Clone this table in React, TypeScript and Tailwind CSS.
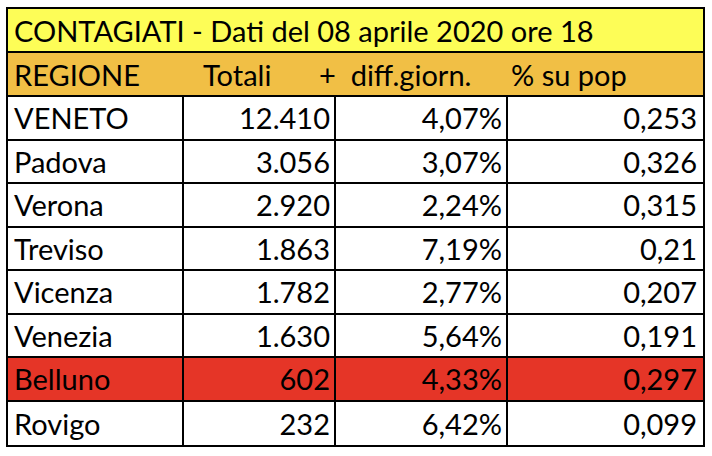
const rows = [
  { name: "VENETO", tot: "12.410", diff: "4,07%", pop: "0,253" },
  { name: "Padova", tot: "3.056", diff: "3,07%", pop: "0,326" },
  { name: "Verona", tot: "2.920", diff: "2,24%", pop: "0,315" },
  { name: "Treviso", tot: "1.863", diff: "7,19%", pop: "0,21" },
  { name: "Vicenza", tot: "1.782", diff: "2,77%", pop: "0,207" },
  { name: "Venezia", tot: "1.630", diff: "5,64%", pop: "0,191" },
  { name: "Belluno", tot: "602", diff: "4,33%", pop: "0,297", red: true },
  { name: "Rovigo", tot: "232", diff: "6,42%", pop: "0,099" },
];

export default function App() {
  return (
    <div className="w-[712px] h-[456px] bg-white pt-[7px] pl-[6px] font-['Lato',sans-serif] text-black">
      <div className="w-[699px] border-2 border-black">
        <div className="h-[44px] bg-[#fdfd57] border-b-2 border-black flex items-center pl-[6px] text-[29px] leading-none">
          CONTAGIATI - Dati del 08 aprile 2020 ore 18
        </div>
        <div className="h-[44px] bg-[#f1bf45] border-b-2 border-black flex items-center text-[29px] leading-none">
          <span className="pl-[6px] w-[195px]">REGIONE</span>
          <span className="w-[116px]">Totali</span>
          <span className="w-[192px]">+&nbsp;&nbsp;diff.giorn.</span>
          <span>% su pop</span>
        </div>
        {rows.map((r, i) => (
          <div
            key={r.name}
            className={`grid grid-cols-[176px_152px_172px_1fr] h-[43.5px] text-[29px] leading-none ${
              i < rows.length - 1 ? "border-b-2 border-black" : ""
            } ${r.red ? "bg-[#e53527]" : "bg-white"}`}
          >
            <div className="border-r-2 border-black flex items-center pl-[6px]">{r.name}</div>
            <div className="border-r-2 border-black flex items-center justify-end pr-[4px]">{r.tot}</div>
            <div className="border-r-2 border-black flex items-center justify-end pr-[4px]">{r.diff}</div>
            <div className="flex items-center justify-end pr-[6px]">{r.pop}</div>
          </div>
        ))}
      </div>
    </div>
  );
}
